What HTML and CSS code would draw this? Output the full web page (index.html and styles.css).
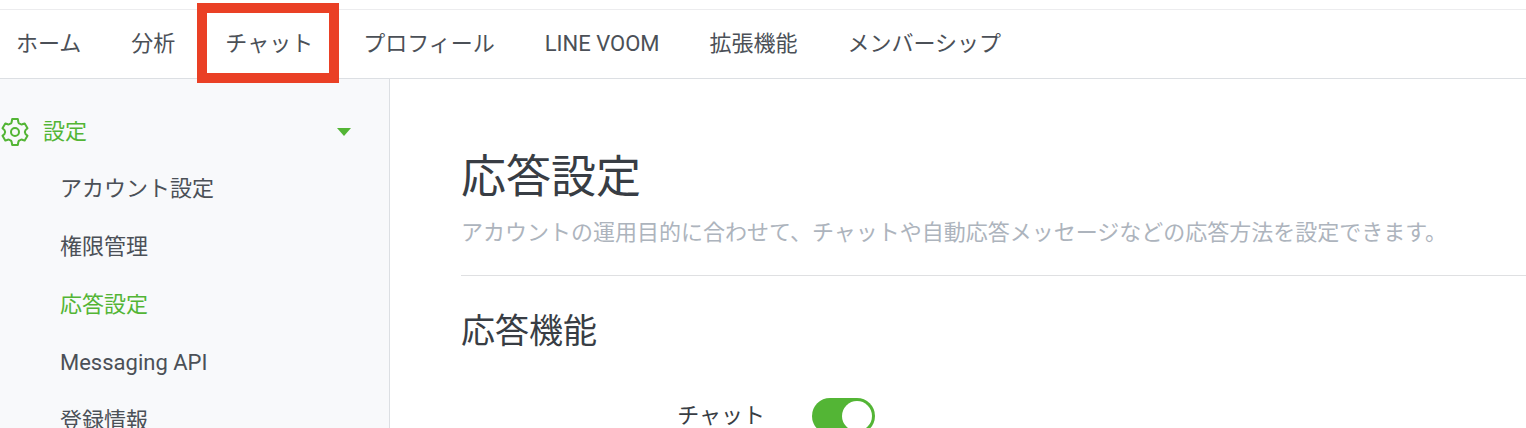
FILE: index.html
```html
<!DOCTYPE html>
<html lang="ja">
<head>
    <meta charset="UTF-8">
    <meta name="viewport" content="width=device-width, initial-scale=1.0">
    <title>応答設定</title>
    <link rel="stylesheet" href="styles.css">
</head>
<body>
    <nav class="navbar">
        <a href="#home">ホーム</a>
        <a href="#insight">分析</a>
        <a href="#chat" class="marked">チャット</a>
        <a href="#profile">プロフィール</a>
        <a href="#voom">LINE VOOM</a>
        <a href="#extensions">拡張機能</a>
        <a href="#membership">メンバーシップ</a>
    </nav>

    <div class="layout">
        <aside class="sidebar">
            <a href="#settings" class="sidebar-title">
                <svg class="gear" viewBox="0 0 30 30" aria-hidden="true">
                    <path d="M12.200 2h5.600l.6 3.200q.2.900 1 1.300l1.200.7q.8.400 1.600.1l2.500-.9 2.800 4.800-2 1.900q-1.300 1.900 0 3.800l2 1.900-2.800 4.800-2.500-.9q-.8-.3-1.600.1l-1.200.7q-.8.400-1 1.300l-.6 3.200h-5.600l-.6-3.200q-.2-.9-1-1.300l-1.200-.7q-.8-.4-1.600-.1l-2.500.9-2.800-4.800 2-1.900q1.300-1.900 0-3.800l-2-1.900 2.800-4.800 2.500.9q.8.300 1.600-.1l1.200-.7q.8-.4 1-1.300z"/>
                    <circle cx="15" cy="15" r="4"/>
                </svg>
                <span>設定</span>
                <span class="caret"></span>
            </a>
            <ul class="sidebar-menu">
                <li><a href="#account">アカウント設定</a></li>
                <li><a href="#permission">権限管理</a></li>
                <li><a href="#response" class="active">応答設定</a></li>
                <li><a href="#api">Messaging API</a></li>
                <li><a href="#info">登録情報</a></li>
            </ul>
        </aside>

        <main class="content">
            <header class="page-header">
                <h1>応答設定</h1>
                <p>アカウントの運用目的に合わせて、チャットや自動応答メッセージなどの応答方法を設定できます。</p>
            </header>

            <section>
                <h2>応答機能</h2>
                <div class="form-row">
                    <label for="chat-switch">チャット</label>
                    <input type="checkbox" id="chat-switch" class="switch" checked>
                </div>
            </section>
        </main>
    </div>
</body>
</html>
```
FILE: styles.css
```css
* {
    margin: 0;
    padding: 0;
    box-sizing: border-box;
}

body {
    display: flex;
    flex-direction: column;
    height: 100vh;
    padding-top: 9px;
    overflow: hidden;
    background: #fff;
    color: #4b5057;
    font-family: Roboto, "Noto Sans CJK JP", sans-serif;
    font-size: 22px;
    line-height: 32px;
}

a {
    color: inherit;
    text-decoration: none;
    white-space: nowrap;
}

/* Navbar */
.navbar {
    display: flex;
    flex: none;
    gap: 50px;
    height: 70px;
    padding: 0 16px;
    border-top: 1px solid #ececee;
    border-bottom: 1px solid #dcdfe3;
}

.navbar a {
    position: relative;
    line-height: 68px;
}

/* Red frame around the highlighted tab */
.navbar .marked::after {
    content: '';
    position: absolute;
    inset: -7px -26px -5px -28px;
    z-index: 1;
    border: 10px solid #ea4025;
}

.layout {
    display: flex;
    flex: 1;
    min-height: 0;
}

/* Sidebar */
.sidebar {
    flex: none;
    width: 390px;
    padding-top: 24px;
    overflow: hidden;
    background: #f8f9fb;
    border-right: 1px solid #dcdfe3;
}

.sidebar-title {
    display: flex;
    align-items: center;
    height: 57px;
    padding-right: 38px;
    color: #53b535;
}

.gear {
    width: 30px;
    height: 30px;
    margin-right: 13px;
    fill: none;
    stroke: #53b535;
    stroke-width: 2;
    stroke-linejoin: round;
}

.caret {
    margin-left: auto;
    border: 7px solid transparent;
    border-top: 8px solid #53b535;
    border-bottom: 0;
}

.sidebar-menu {
    list-style: none;
}

.sidebar-menu a {
    display: block;
    padding-left: 60px;
    line-height: 58px;
}

.sidebar-menu .active {
    color: #53b535;
}

/* Content */
.content {
    flex: 1;
    min-width: 0;
    padding: 66px 0 0 71px;
    overflow: hidden;
    color: #383d44;
}

.page-header {
    padding-bottom: 26px;
    border-bottom: 1px solid #dfe0e2;
}

h1 {
    font-size: 45px;
    font-weight: 400;
    line-height: 66px;
}

.page-header p {
    margin-top: 6px;
    color: #adb4bd;
    white-space: nowrap;
}

h2 {
    margin-top: 30px;
    font-size: 34px;
    font-weight: 400;
    line-height: 50px;
}

.form-row {
    display: flex;
    align-items: center;
    margin-top: 42px;
}

.form-row label {
    width: 304px;
    margin-right: 47px;
    text-align: right;
}

/* Toggle switch */
.switch {
    appearance: none;
    width: 63px;
    height: 36px;
    padding: 3px;
    border-radius: 18px;
    background: #c8cdd3;
    cursor: pointer;
}

.switch::before {
    content: '';
    display: block;
    width: 30px;
    height: 30px;
    border-radius: 50%;
    background: #fff;
}

.switch:checked {
    background: #53b535;
}

.switch:checked::before {
    margin-left: auto;
}
```
